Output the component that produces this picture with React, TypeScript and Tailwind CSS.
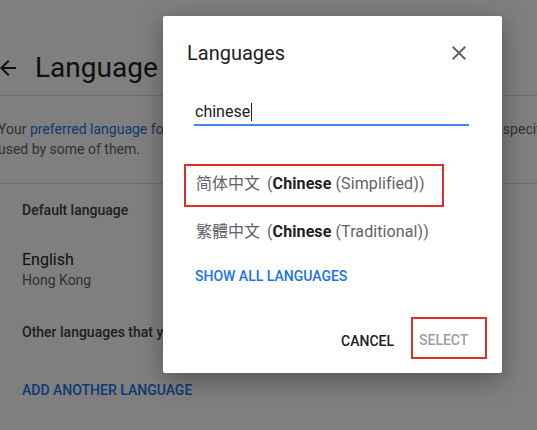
import React from 'react';

const ArrowBack: React.FC = () => (
  <svg width="24" height="24" viewBox="0 0 24 24" className="shrink-0 fill-[#202124]">
    <path d="M20 11H7.83l5.59-5.59L12 4l-8 8 8 8 1.41-1.41L7.83 13H20v-2z" />
  </svg>
);

const CloseIcon: React.FC = () => (
  <svg width="24" height="24" viewBox="0 0 24 24" className="fill-[#5f6368]">
    <path d="M19 6.41L17.59 5 12 10.59 6.41 5 5 6.41 10.59 12 5 17.59 6.41 19 12 13.41 17.59 19 19 17.59 13.41 12z" />
  </svg>
);

const LanguageRow: React.FC<{ native: string; variant: string }> = ({ native, variant }) => (
  <div className="flex h-[48px] items-center pl-[33px] text-[16px] text-[#5f6368] whitespace-nowrap">
    <span className="font-['Roboto','Noto_Sans_CJK_SC',sans-serif]">{native}</span>
    <span className="ml-[7px] tracking-[0.1px]">
      (<span className="font-bold text-[#202124]">Chinese</span> ({variant}))
    </span>
  </div>
);

const App: React.FC = () => {
  return (
    <div className="relative h-[430px] w-[537px] overflow-hidden bg-white font-['Roboto',sans-serif]">
      {/* Settings page underneath */}
      <div className="flex flex-col">
        <header className="mt-[48px] mb-[7px] flex h-[40px] items-center">
          <div className="-ml-[4px]">
            <ArrowBack />
          </div>
          <h1 className="ml-[15px] text-[28px] leading-[40px] text-[#202124]">Language</h1>
        </header>

        <div className="border-t border-[#dadce0] pt-[23px] pb-[24px] text-[14px] leading-[20px] text-[#5f6368]">
          <p className="-ml-[2px] whitespace-nowrap">
            Your <span className="text-[#1a73e8]">preferred language</span> for Chrome and websites is listed first. Pages will use t
            <span className="-ml-[6px]">he specified languages</span>
          </p>
          <p className="-ml-[2px] whitespace-nowrap">used by some of them.</p>
        </div>

        <div className="border-t border-[#dadce0] px-[22px] pt-[16px]">
          <div className="text-[14px] leading-[20px] font-medium text-[#3c4043]">Default language</div>
          <div className="mt-[30px] text-[16px] leading-[20px] text-[#202124]">English</div>
          <div className="text-[14px] leading-[20px] text-[#5f6368]">Hong Kong</div>
          <div className="mt-[32px] text-[14px] leading-[20px] font-medium text-[#3c4043]">Other languages that you understand</div>
          <div className="mt-[38px] text-[14px] leading-[20px] font-medium text-[#1a73e8]">ADD ANOTHER LANGUAGE</div>
        </div>
      </div>

      {/* Scrim */}
      <div className="absolute inset-0 bg-black/50" />

      {/* Dialog */}
      <div className="absolute left-[163px] top-[16px] flex h-[357px] w-[339px] flex-col rounded-[2px] bg-white shadow-[0_6px_24px_rgba(0,0,0,0.35)]">
        <div className="flex items-center justify-between pt-[25px] pl-[24px] pr-[31px]">
          <h2 className="text-[20px] leading-[24px] text-[#202124]">Languages</h2>
          <CloseIcon />
        </div>

        <div className="mt-[35px] ml-[31px] mr-[33px] flex h-[26px] items-center border-b-2 border-[#4285f4]">
          <span className="ml-[1px] text-[16px] leading-[24px] text-[#202124]">chinese</span>
          <span className="ml-[1px] h-[18px] w-[1px] bg-[#202124]" />
        </div>

        <div className="relative mt-[34px]">
          <LanguageRow native="简体中文" variant="Simplified" />
          <LanguageRow native="繁體中文" variant="Traditional" />
          <div className="pointer-events-none absolute left-[21px] top-[4px] h-[43px] w-[260px] border-2 border-[#d9302c]" />
        </div>

        <div className="mt-[10px] pl-[32px] text-[14px] leading-[20px] font-medium text-[#1a73e8]">SHOW ALL LANGUAGES</div>

        <div className="mt-auto mb-[14px] flex items-center justify-end pr-[15px]">
          <button className="mt-[6px] h-[36px] px-[8px] text-[14px] font-medium text-[#202124]">CANCEL</button>
          <div className="ml-[9px] flex h-[42px] w-[76px] items-center border-2 border-[#d9302c] pt-[5px] pl-[6px]">
            <button className="text-[14px] font-medium text-[#9aa0a6]">SELECT</button>
          </div>
        </div>
      </div>
    </div>
  );
};

export default App;
